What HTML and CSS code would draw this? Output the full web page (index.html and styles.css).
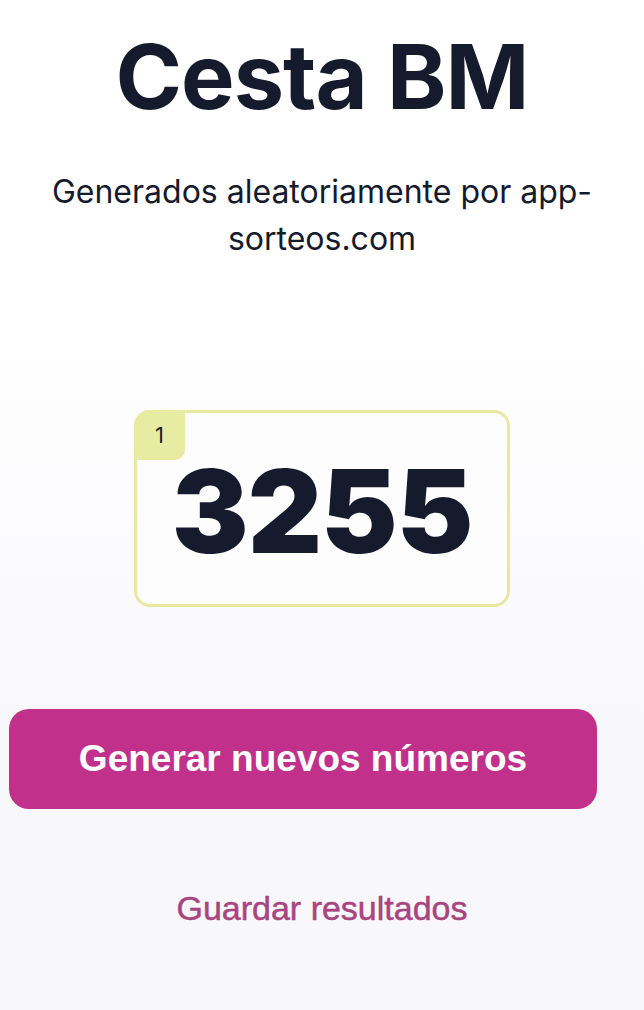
FILE: index.html
```html
<!DOCTYPE html>
<html lang="es">
<head>
<meta charset="utf-8">
<title>Cesta BM</title>
<link rel="stylesheet" href="styles.css">
</head>
<body>
<main class="page">
  <h1 class="title">Cesta BM</h1>
  <p class="subtitle">Generados aleatoriamente por app-sorteos.com</p>
  <section class="results">
    <div class="card">
      <span class="badge">1</span>
      <span class="number">3255</span>
    </div>
  </section>
  <button class="btn-primary" type="button">Generar nuevos números</button>
  <a class="link-save" href="#">Guardar resultados</a>
</main>
</body>
</html>
```
FILE: styles.css
```css
html, body {
  margin: 0;
  padding: 0;
}
body {
  width: 644px;
  height: 1010px;
  overflow: hidden;
  background: linear-gradient(to bottom, #ffffff 0px, #ffffff 330px, #f8f7fb 720px, #f8f7fb 1010px);
  font-family: Inter, "Liberation Sans", sans-serif;
  color: #151b2c;
}
.page {
  display: flex;
  flex-direction: column;
  align-items: center;
}
.title {
  margin: 22px 0 0;
  font-size: 90px;
  font-weight: 700;
  line-height: 110px;
  letter-spacing: -1px;
}
.subtitle {
  margin: 36px 0 0;
  width: 600px;
  text-align: center;
  font-size: 32px;
  font-weight: 400;
  line-height: 47px;
  color: #151b2c;
}
.results {
  margin-top: 148px;
  display: flex;
  justify-content: center;
}
.card {
  position: relative;
  width: 370px;
  height: 191px;
  border: 3px solid #e6e99f;
  border-radius: 16px;
  background: #fdfdfe;
  display: flex;
  align-items: center;
  justify-content: center;
}
.badge {
  position: absolute;
  top: -3px;
  left: -3px;
  width: 51px;
  height: 50px;
  background: #e8eba2;
  border-radius: 16px 0 10px 0;
  display: flex;
  align-items: center;
  justify-content: center;
  font-size: 22px;
  font-weight: 400;
  color: #1b1f2a;
  box-sizing: border-box;
}
.number {
  font-size: 115px;
  font-weight: 900;
  letter-spacing: -1px;
  line-height: 1;
  color: #151b2c;
  margin-top: 6px;
}
.btn-primary {
  margin: 102px 47px 0 9px;
  align-self: flex-start;
  width: 588px;
  height: 100px;
  border: none;
  border-radius: 20px;
  background: #c1318b;
  color: #ffffff;
  font-family: "Liberation Sans", Arial, sans-serif;
  font-size: 37px;
  font-weight: 700;
  cursor: pointer;
}
.link-save {
  margin-top: 80px;
  font-family: "Liberation Sans", Arial, sans-serif;
  font-size: 34px;
  color: #a8457f;
  -webkit-text-stroke: 0.5px #a8457f;
  text-decoration: none;
}
```
